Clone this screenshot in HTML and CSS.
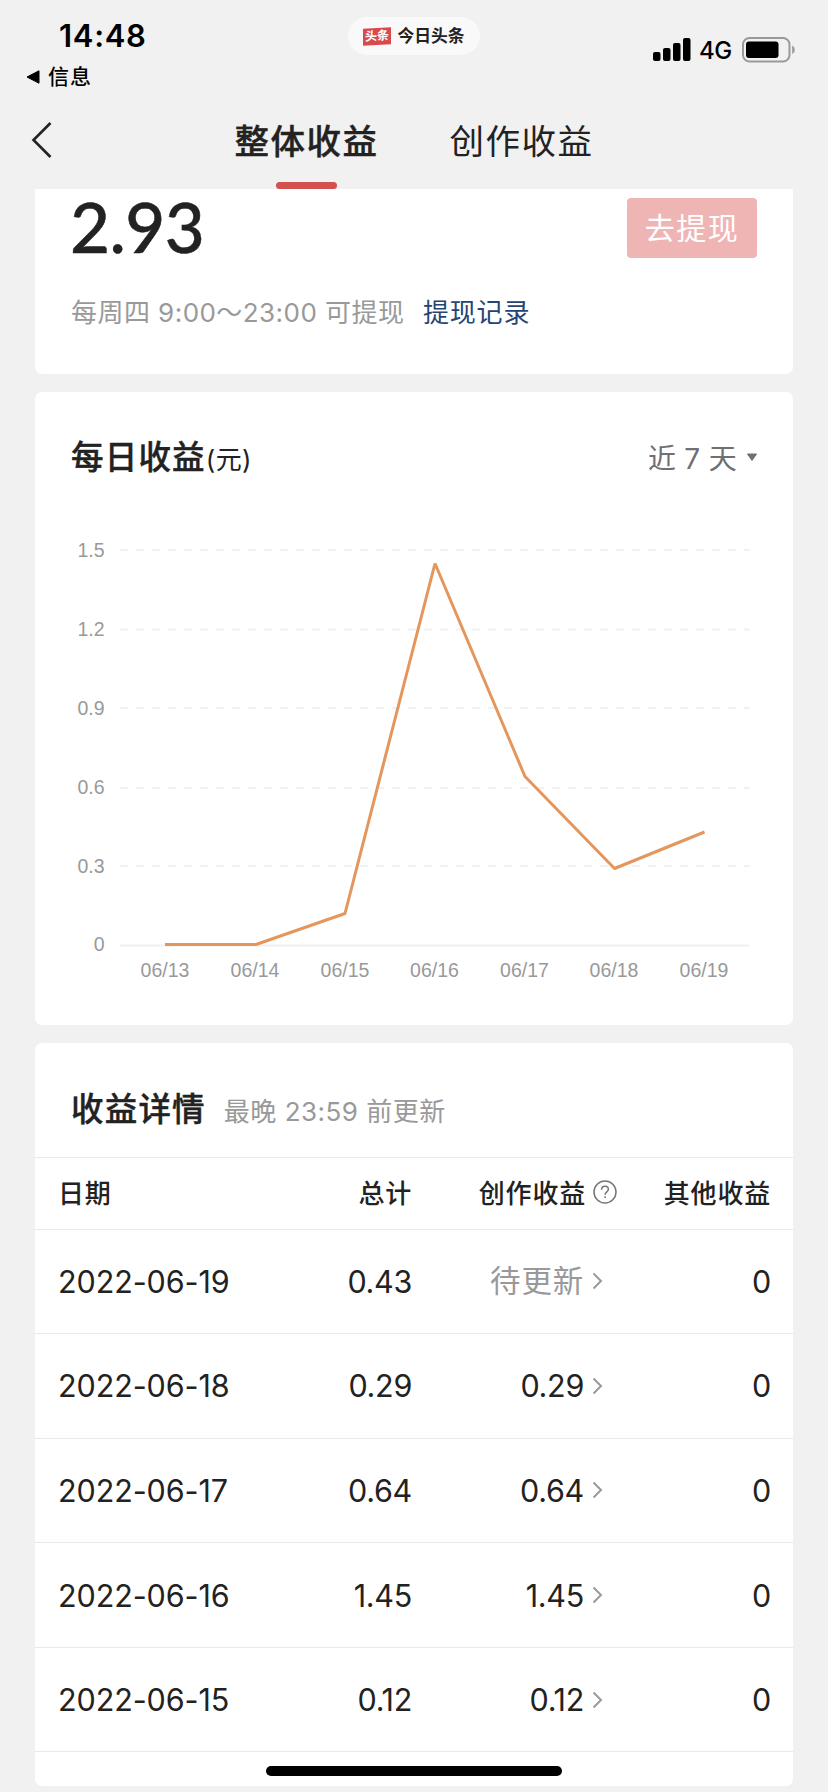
FILE: index.html
```
<!DOCTYPE html>
<html lang="zh-CN">
<head>
<meta charset="utf-8">
<title>整体收益</title>
<link rel="stylesheet" href="styles.css">
</head>
<body>
<div class="screen">
  <header class="status">
    <div class="status-left">
      <div class="clock">14:48</div>
      <div class="return-app">
        <svg width="14" height="14" viewBox="0 0 14 14"><path d="M1 7 13 .8V13.2Z" fill="#000" stroke="#000" stroke-width="1" stroke-linejoin="round"/></svg>
        <span>信息</span>
      </div>
    </div>
    <div class="app-pill"><span class="app-badge">头条</span><span class="app-name">今日头条</span></div>
    <div class="status-right">
      <svg width="38" height="24" viewBox="0 0 38 24"><rect x="0" y="14" width="7.5" height="9" rx="2"/><rect x="10" y="10" width="7.5" height="13" rx="2"/><rect x="20" y="5" width="7.5" height="18" rx="2"/><rect x="30" y="0" width="7.5" height="23" rx="2"/></svg>
      <span class="network">4G</span>
      <svg class="battery" width="54" height="26" viewBox="0 0 54 26"><rect x="1" y="1" width="46.500" height="23.500" rx="6.500" fill="none" stroke="#999" stroke-width="2"/><rect x="4" y="4.500" width="32.500" height="16.500" rx="3"/><path d="M50.200 8.500c3.400 1.800 3.400 6.700 0 8.500Z" fill="#999"/></svg>
    </div>
  </header>

  <nav class="nav">
    <svg class="back" width="22" height="38" viewBox="0 0 22 38"><path d="M19.500 2 2.500 19 19.500 36" fill="none" stroke="#222" stroke-width="2.600"/></svg>
    <div class="tab tab-active">整体收益</div>
    <div class="tab">创作收益</div>
  </nav>

  <main class="cards">
    <section class="card balance">
      <div class="balance-row">
        <div class="amount">2.93</div>
        <button class="withdraw">去提现</button>
      </div>
      <div class="balance-note"><span class="schedule">每周四 9:00～23:00 可提现</span><a class="history">提现记录</a></div>
    </section>

    <section class="card daily">
      <div class="daily-head">
        <h2 class="title">每日收益<small class="unit">(元)</small></h2>
        <div class="range"><span>近 7 天</span><svg width="12" height="9" viewBox="0 0 12 9"><path d="M1.500 1h9L6 7.500Z" fill="#707070" stroke="#707070" stroke-linejoin="round"/></svg></div>
      </div>
      <svg class="chart" width="758" height="520" viewBox="35 505 758 520">
        <g class="grid">
          <path d="M120 550H750"/><path d="M120 629.500H750"/><path d="M120 708H750"/><path d="M120 788H750"/><path d="M120 866H750"/>
        </g>
        <path class="axis" d="M120 945.500H749"/>
        <g class="ylabels">
          <text x="104.500" y="556.500">1.5</text><text x="104.500" y="635.500">1.2</text><text x="104.500" y="714.500">0.9</text><text x="104.500" y="793.500">0.6</text><text x="104.500" y="872.500">0.3</text><text x="104.500" y="951">0</text>
        </g>
        <g class="xlabels">
          <text x="165" y="977">06/13</text><text x="255" y="977">06/14</text><text x="345" y="977">06/15</text><text x="434.500" y="977">06/16</text><text x="524.500" y="977">06/17</text><text x="614" y="977">06/18</text><text x="704" y="977">06/19</text>
        </g>
        <path class="series" d="M165 944.500H256L345 913.500 435 563.500 525 776.500 614.500 868.500 704.500 832"/>
      </svg>
    </section>

    <section class="card detail">
      <div class="detail-head"><h2 class="title">收益详情</h2><span class="update">最晚 23:59 前更新</span></div>
      <div class="row head">
        <span>日期</span><span class="num">总计</span>
        <span class="work">创作收益<svg class="help" width="24" height="24" viewBox="0 0 24 24" fill="none" stroke="#777" stroke-width="1.500"><circle cx="12" cy="12" r="11"/><path d="M8.600 9.700c0-2.200 1.400-3.500 3.400-3.500s3.400 1.200 3.400 3.100c0 2.500-3.300 2.800-3.300 5.500"/><path d="M12.100 16.300v1.800"/></svg></span>
        <span class="num">其他收益</span>
      </div>
      <div class="row"><span class="date">2022-06-19</span><span class="num">0.43</span><span class="work"><span class="pending">待更新</span><svg class="more" width="11" height="18" viewBox="0 0 11 18"><path d="M1.500 1.500 9 9 1.500 16.500"/></svg></span><span class="num">0</span></div>
      <div class="row"><span class="date">2022-06-18</span><span class="num">0.29</span><span class="work">0.29<svg class="more" width="11" height="18" viewBox="0 0 11 18"><path d="M1.500 1.500 9 9 1.500 16.500"/></svg></span><span class="num">0</span></div>
      <div class="row"><span class="date">2022-06-17</span><span class="num">0.64</span><span class="work">0.64<svg class="more" width="11" height="18" viewBox="0 0 11 18"><path d="M1.500 1.500 9 9 1.500 16.500"/></svg></span><span class="num">0</span></div>
      <div class="row"><span class="date">2022-06-16</span><span class="num">1.45</span><span class="work">1.45<svg class="more" width="11" height="18" viewBox="0 0 11 18"><path d="M1.500 1.500 9 9 1.500 16.500"/></svg></span><span class="num">0</span></div>
      <div class="row"><span class="date">2022-06-15</span><span class="num">0.12</span><span class="work">0.12<svg class="more" width="11" height="18" viewBox="0 0 11 18"><path d="M1.500 1.500 9 9 1.500 16.500"/></svg></span><span class="num">0</span></div>
      <div class="row-rest"></div>
    </section>
  </main>
  <div class="home-indicator"></div>
</div>
</body>
</html>
```
FILE: styles.css
```
* { box-sizing: border-box; }
body {
  margin: 0;
  background: #f1f1f1;
  color: #222;
  font-family: Inter, "Noto Sans CJK SC", sans-serif;
}
svg { display: block; flex: none; }
.screen { position: relative; width: 828px; height: 1792px; overflow: hidden; }

.status { display: grid; grid-template-columns: 1fr 132px 1fr; height: 100px; }
.clock { padding: 17px 0 0 59px; font-size: 31px; line-height: 38px; font-weight: 600; color: #000; letter-spacing: .7px; }
.return-app { display: flex; align-items: center; gap: 8px; padding: 6px 0 0 26px; font-size: 21px; line-height: 32px; font-weight: 500; color: #000; letter-spacing: 1px; }
.app-pill { display: flex; align-items: center; justify-content: center; gap: 6px; height: 38px; margin-top: 17px; border-radius: 19px; background: #f9f9f9; }
.app-badge { width: 28px; height: 17px; background: #d94b4b; color: #fff; font-size: 12px; line-height: 16px; font-weight: 700; text-align: center; transform: skewY(-3deg); }
.app-name { font-size: 16.800px; line-height: 24px; font-weight: 700; }
.status-right { display: flex; align-items: flex-start; padding: 38px 0 0 173px; }
.network { width: 42px; margin-left: 8px; margin-right: 1px; font-size: 24px; line-height: 26px; color: #000; font-weight: 500; letter-spacing: -.5px; }
.battery { margin-top: -1px; }

.nav { display: flex; height: 89px; padding-left: 31px; }
.back { margin-top: 21px; }
.tab { display: flex; flex-direction: column; align-items: center; width: 143px; margin-left: 72px; font-size: 34.500px; line-height: 50px; letter-spacing: 1.500px; white-space: nowrap; padding-top: 17px; }
.tab-active { margin-left: 182px; font-weight: 500; -webkit-text-stroke: .4px #222; }
.tab-active::after { content: ""; width: 61px; height: 7px; margin-top: 15px; border-radius: 3.500px; background: #d2504d; }

.cards { display: flex; flex-direction: column; gap: 18px; width: 758px; margin-left: 35px; }
.card { background: #fff; border-radius: 7px; }
.balance { height: 185px; border-radius: 0 0 7px 7px; }
.balance-row { display: flex; justify-content: space-between; height: 69px; padding: 0 36px 0 35px; }
.amount { font-family: Lato, sans-serif; font-size: 69px; font-weight: 500; line-height: 75px; letter-spacing: -.500px; -webkit-text-stroke: .5px #222; }
.withdraw { width: 130px; height: 60px; margin: 9px 0 0; padding: 0 0 4px; border: 0; border-radius: 4px; background: #efb5b5; color: #fff; font: 30px/1 "Noto Sans CJK SC", sans-serif; letter-spacing: 1.500px; }
.balance-note { display: flex; padding: 36px 36px 0; font-size: 26px; line-height: 38px; letter-spacing: .8px; }
.schedule { width: 352px; color: #999; white-space: nowrap; letter-spacing: .45px; }
.history { color: #264474; }

.daily { height: 633px; }
.daily-head { display: flex; justify-content: space-between; height: 113px; padding: 42px 35px 0 36px; }
.title { margin: 0; font-size: 32.500px; line-height: 48px; font-weight: 500; letter-spacing: 1.200px; white-space: nowrap; -webkit-text-stroke: .4px #222; }
.unit { font-size: 26px; font-weight: 400; letter-spacing: .4px; -webkit-text-stroke: 0; }
.range { display: flex; align-items: center; gap: 9px; height: 46px; font-size: 28px; color: #707070; letter-spacing: .3px; }
.grid path { stroke: #f1f1f1; stroke-width: 2; stroke-dasharray: 8 8; }
.axis { stroke: #f0f0f0; stroke-width: 2; }
.series { fill: none; stroke: #e4965c; stroke-width: 3; stroke-linejoin: bevel; }
.ylabels, .xlabels { font: 19.500px "Liberation Sans", sans-serif; fill: #999; }
.ylabels { text-anchor: end; }
.xlabels { text-anchor: middle; }

.detail { height: 743px; }
.detail-head { display: flex; height: 114px; padding: 43px 36px 0; }
.update { margin: 7px 0 0 18px; font-size: 26px; line-height: 38px; color: #999; letter-spacing: .5px; }
.row { display: grid; grid-template-columns: 200px 154px 212px 147px; padding: 0 23px; align-items: center; height: 104.600px; border-top: 1px solid #e9e9e9; font-size: 30.500px; }
.head { height: 71.500px; padding-bottom: 4px; font-size: 26px; font-weight: 500; letter-spacing: .8px; }
.num { text-align: right; white-space: nowrap; letter-spacing: -.3px; }
.head .num { letter-spacing: .8px; }
.date { letter-spacing: -.1px; }
.work { display: flex; align-items: center; justify-content: flex-end; padding-right: 21px; white-space: nowrap; letter-spacing: -.3px; }
.head .work { padding-right: 7px; letter-spacing: .8px; }
.help { margin: 2px 0 0 7px; }
.more { margin-left: 8px; fill: none; stroke: #999; stroke-width: 2; }
.pending { padding-bottom: 4px; color: #999; letter-spacing: .8px; }
.row-rest { border-top: 1px solid #e9e9e9; }

.home-indicator { position: absolute; left: 266px; top: 1766px; width: 296px; height: 10px; border-radius: 5px; background: #000; }
```
